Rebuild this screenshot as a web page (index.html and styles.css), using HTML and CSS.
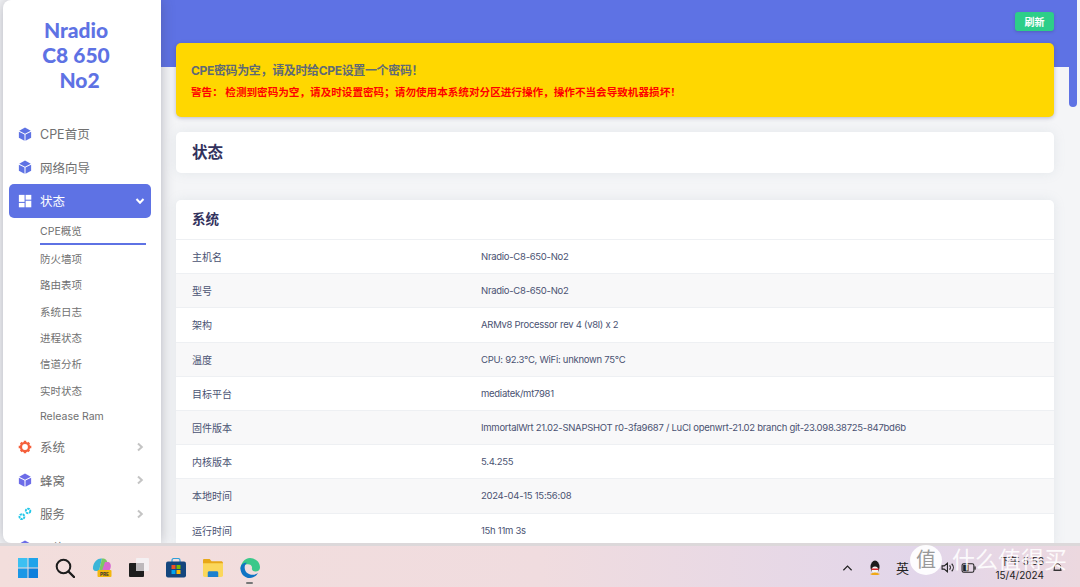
FILE: index.html
```html
<!DOCTYPE html>
<html lang="zh">
<head>
    <meta charset="UTF-8">
    <title>Nradio C8 650 No2</title>
    <link rel="stylesheet" href="styles.css">
</head>
<body>
    <svg class="defs" width="0" height="0">
        <symbol id="cube" viewBox="0 0 16 16">
            <path d="M8 .6 14.600 4.200 8 7.600 1.400 4.200Z"/>
            <path d="M1 5.300 7.400 8.700V15.600L1 12.200Z"/>
            <path d="M15 5.300 8.600 8.700V15.600L15 12.200Z"/>
        </symbol>
        <symbol id="chev-right" viewBox="0 0 10 10">
            <path d="M3 1.500 6.800 5 3 8.500" fill="none" stroke="currentColor" stroke-width="2"/>
        </symbol>
    </svg>

    <div class="window">
        <aside class="sidebar">
            <div class="logo">Nradio<br>C8 650<br><span class="logo-last">No2</span></div>
            <nav class="menu">
                <a class="menu-item"><svg class="menu-icon icon-blue"><use href="#cube"/></svg>CPE首页</a>
                <a class="menu-item"><svg class="menu-icon icon-blue"><use href="#cube"/></svg>网络向导</a>
                <a class="menu-item active">
                    <svg class="menu-icon" viewBox="0 0 16 16" fill="#fff">
                        <rect x="1" y="1" width="6.500" height="8"/>
                        <rect x="8.700" y="1" width="6.500" height="5.500"/>
                        <rect x="1" y="10.200" width="6.500" height="5"/>
                        <rect x="8.700" y="7.700" width="6.500" height="7.500"/>
                    </svg>
                    状态
                    <svg class="arrow" viewBox="0 0 10 10"><path d="M1.500 3 5 6.800 8.500 3" fill="none" stroke="#fff" stroke-width="2"/></svg>
                </a>
                <div class="submenu">
                    <a class="sub-item current">CPE概览</a>
                    <a class="sub-item">防火墙项</a>
                    <a class="sub-item">路由表项</a>
                    <a class="sub-item">系统日志</a>
                    <a class="sub-item">进程状态</a>
                    <a class="sub-item">信道分析</a>
                    <a class="sub-item">实时状态</a>
                    <a class="sub-item">Release Ram</a>
                </div>
                <a class="menu-item">
                    <svg class="menu-icon" viewBox="0 0 16 16">
                        <circle cx="8" cy="8" r="4.600" fill="none" stroke="#f5603c" stroke-width="2.600"/>
                        <path d="M6.600.8h2.800v2.400H6.600zM6.600 12.800h2.800v2.400H6.600zM.8 6.600h2.400v2.800H.8zM12.800 6.600h2.400v2.800h-2.400zM2.200 4l2-2 1.600 1.600-2 2zM10.200 12.400l2-2 1.600 1.600-2 2zM2.200 12l1.600-1.600 2 2-1.600 1.600zM10.200 3.600l1.600-1.600 2 2-1.600 1.600z" fill="#f5603c"/>
                    </svg>
                    系统
                    <svg class="arrow chev"><use href="#chev-right"/></svg>
                </a>
                <a class="menu-item"><svg class="menu-icon icon-violet"><use href="#cube"/></svg>蜂窝<svg class="arrow chev"><use href="#chev-right"/></svg></a>
                <a class="menu-item">
                    <svg class="menu-icon" viewBox="0 0 16 16" fill="none" stroke="#22c7e8" stroke-width="2.200" stroke-dasharray="2.600 .8">
                        <circle cx="4.500" cy="11" r="2.800"/>
                        <circle cx="11.500" cy="4.500" r="2.600"/>
                    </svg>
                    服务
                    <svg class="arrow chev"><use href="#chev-right"/></svg>
                </a>
                <a class="menu-item"><svg class="menu-icon icon-violet"><use href="#cube"/></svg>网络</a>
            </nav>
        </aside>

        <main class="main">
            <header class="topbar"><button class="btn-refresh">刷新</button></header>

            <section class="card alert">
                <h4 class="alert-title">CPE密码为空，请及时给CPE设置一个密码！</h4>
                <p class="alert-text">警告： 检测到密码为空，请及时设置密码；请勿使用本系统对分区进行操作，操作不当会导致机器损坏！</p>
            </section>

            <section class="card page-title"><h2>状态</h2></section>

            <section class="card system">
                <h3>系统</h3>
                <div class="row"><span class="row-key">主机名</span><span>Nradio-C8-650-No2</span></div>
                <div class="row"><span class="row-key">型号</span><span>Nradio-C8-650-No2</span></div>
                <div class="row"><span class="row-key">架构</span><span>ARMv8 Processor rev 4 (v8l) x 2</span></div>
                <div class="row"><span class="row-key">温度</span><span>CPU: 92.3°C, WiFi: unknown 75°C</span></div>
                <div class="row"><span class="row-key">目标平台</span><span>mediatek/mt7981</span></div>
                <div class="row"><span class="row-key">固件版本</span><span>ImmortalWrt 21.02-SNAPSHOT r0-3fa9687 / LuCI openwrt-21.02 branch git-23.098.38725-847bd6b</span></div>
                <div class="row"><span class="row-key">内核版本</span><span>5.4.255</span></div>
                <div class="row"><span class="row-key">本地时间</span><span>2024-04-15 15:56:08</span></div>
                <div class="row"><span class="row-key">运行时间</span><span>15h 11m 3s</span></div>
            </section>
        </main>

        <div class="scrollbar"><div class="scroll-thumb"></div></div>
    </div>

    <footer class="taskbar">
        <div class="task-apps">
            <svg class="app" viewBox="0 0 20 20">
                <rect x="0" y="0" width="9.500" height="9.500" fill="#3cc0f2"/>
                <rect x="10.500" y="0" width="9.500" height="9.500" fill="#1fa3ea"/>
                <rect x="0" y="10.500" width="9.500" height="9.500" fill="#1a97e6"/>
                <rect x="10.500" y="10.500" width="9.500" height="9.500" fill="#0c7fdc"/>
            </svg>
            <svg class="app" viewBox="0 0 20 20" fill="none" stroke="#1c1c1c" stroke-width="2">
                <circle cx="8.500" cy="8.500" r="6.800"/>
                <path d="M13.500 13.500 19 19" stroke-linecap="round" stroke-width="2.400"/>
            </svg>
            <svg class="app" viewBox="0 0 20 20">
                <path d="M1 9C2 3 6 0 10 .5L7 13H4C1.500 13 .6 11 1 9Z" fill="#3bb5d8"/>
                <path d="M10 .5C14 .5 15 2.500 15.500 5L12 13H7Z" fill="#7cc864"/>
                <path d="M13 4H16.500C19.500 5 19.500 10 17 13H10Z" fill="#d86bd0"/>
                <rect x="5.500" y="12" width="14" height="7" rx="1" fill="#f2b70f"/>
                <text class="app-label" x="12.500" y="17.800" text-anchor="middle">PRE</text>
            </svg>
            <svg class="app" viewBox="0 0 20 20">
                <rect x="7" y="0" width="13" height="13" rx="1" fill="#f4f0f2"/>
                <rect x="0" y="5" width="15" height="14" rx="1" fill="#1e1e1e"/>
                <rect x="7" y="5" width="8" height="8" fill="#bdb9bc"/>
            </svg>
            <svg class="app" viewBox="0 0 20 20">
                <path d="M6 4V2.500C6 1 7 .5 8 .5H12C13 .5 14 1 14 2.500V4" fill="none" stroke="#2f9fd8" stroke-width="1.200"/>
                <rect x="0" y="3.500" width="20" height="16" rx="2" fill="#14467e"/>
                <rect x="5.500" y="7" width="4" height="4" fill="#f25022"/>
                <rect x="10.500" y="7" width="4" height="4" fill="#7fba00"/>
                <rect x="5.500" y="12" width="4" height="4" fill="#00a4ef"/>
                <rect x="10.500" y="12" width="4" height="4" fill="#ffb900"/>
            </svg>
            <svg class="app" viewBox="0 0 21 20">
                <path d="M0 2C0 1 .5.500 1.500.500H7L9 3H19C20 3 21 3.500 21 5V6H0Z" fill="#e8a818"/>
                <path d="M0 5H21V18C21 19 20 19.500 19 19.500H2C1 19.500 0 19 0 18Z" fill="#fbd75b"/>
                <path d="M5 19.500V15C5 14 6 13.500 7 13.500H14C15 13.500 16 14 16 15V19.500Z" fill="#1c80cf"/>
            </svg>
            <div class="app-current">
                <svg class="app" viewBox="0 0 20 20">
                    <path d="M10 0C15 0 20 4 20 9.500C20 12 18 13.500 15.500 13.500C13 13.500 11.500 12 12 10C12.500 7 9 5.500 6 6.500C3 7.500 1 10 .5 12C.5 5 4.500 0 10 0Z" fill="#3bc88a"/>
                    <path d="M.5 10C1 6 4 4.500 7 4.800C3.500 7 4 13 8 15.500C11 17.500 15.500 17 18 15C16 18.500 13 20 10 20C4 20 .3 15 .5 10Z" fill="#0f74c4"/>
                </svg>
                <span class="app-dot"></span>
            </div>
        </div>
        <div class="tray">
            <svg class="tray-chevron" viewBox="0 0 12 8"><path d="M1.500 6.500 6 2 10.500 6.500" fill="none" stroke="#222" stroke-width="1.300"/></svg>
            <svg class="tray-qq" viewBox="0 0 12 15">
                <ellipse cx="6" cy="7" rx="4.500" ry="6.500" fill="#1c1c1c"/>
                <ellipse cx="6" cy="10" rx="3.300" ry="3.500" fill="#f4f4f4"/>
                <path d="M2 8.500H10L9 10H3Z" fill="#d8262c"/>
                <path d="M1 14 5 12.500H7L11 14 9 15H3Z" fill="#f0a818"/>
            </svg>
            <span class="tray-lang">英</span>
            <svg class="tray-icon" viewBox="0 0 14 12" fill="none" stroke="#222" stroke-width="1">
                <path d="M1 4.500H3L6 2V10L3 7.500H1Z"/>
                <path d="M8 4C9 5 9 7 8 8M10 2.500C12 4.500 12 7.500 10 9.500"/>
            </svg>
            <svg class="tray-icon" viewBox="0 0 14 12">
                <rect x="1" y="2.500" width="11" height="8" rx="1.500" fill="none" stroke="#222"/>
                <rect x="2" y="3.500" width="5" height="6" fill="#222"/>
                <rect x="12.500" y="5" width="1.200" height="3" fill="#222"/>
            </svg>
            <div class="clock"><span>下午 5:56</span><span>15/4/2024</span></div>
            <svg class="tray-bell" viewBox="0 0 12 12" fill="none" stroke="#222"><path d="M2.500 9V5.500C2.500 3.500 4 2 6 2S9.500 3.500 9.500 5.500V9ZM1.500 9H10.500"/></svg>
        </div>
        <div class="watermark">
            <span class="wm-badge">值</span>
            <span class="wm-name">什么值得买</span>
        </div>
    </footer>
</body>
</html>
```

FILE: styles.css
```css
* {
    box-sizing: border-box;
}
html, body {
    margin: 0;
    height: 587px;
    overflow: hidden;
}
body {
    font-family: Inter, "Noto Sans CJK SC", sans-serif;
    background-color: #f4f5f7;
    color: #525f7f;
}
h2, h3, h4, p {
    margin: 0;
}
.defs {
    position: absolute;
}
.window {
    display: flex;
    height: 543px;
    padding-left: 3px;
    background-color: #f4f5f7;
    overflow: hidden;
}

/* sidebar */
.sidebar {
    flex: none;
    width: 158px;
    height: 543px;
    background-color: #fff;
    border-radius: 8px 0 0 8px;
    box-shadow: 0 0 14px rgba(60, 60, 80, 0.35);
    overflow: hidden;
    position: relative;
    z-index: 1;
}
.logo {
    height: 117px;
    padding: 17px 12px 0 0;
    text-align: center;
    font-family: Lato, "Noto Sans CJK SC", sans-serif;
    font-size: 21px;
    font-weight: 900;
    line-height: 25px;
    color: #5e72e4;
}
.logo-last {
    padding-left: 7px;
}
.menu {
    display: flex;
    flex-direction: column;
}
.menu-item {
    display: flex;
    align-items: center;
    flex: none;
    height: 33.6px;
    margin: 0 10px 0 6px;
    padding: 0 6px 0 9px;
    border-radius: 5px;
    font-size: 12.5px;
    color: #707070;
}
.menu-item.active {
    background-color: #5e72e4;
    color: #fff;
}
.menu-icon {
    flex: none;
    width: 14px;
    height: 14px;
    margin-right: 8px;
}
.icon-blue {
    fill: #5e72e4;
}
.icon-violet {
    fill: #6c6ce8;
}
.arrow {
    width: 10px;
    height: 10px;
    margin-left: auto;
}
.chev {
    color: #c4c4c4;
}
.submenu {
    display: flex;
    flex-direction: column;
    padding: 1px 0 0 37px;
}
.sub-item {
    display: flex;
    align-items: center;
    height: 26.4px;
    margin-right: 15px;
    font-size: 10.5px;
    color: #707070;
}
.sub-item.current {
    border-bottom: 2px solid #5e72e4;
}

/* main column */
.main {
    flex: none;
    width: 908px;
    padding: 0 15px;
    overflow: hidden;
}
.topbar {
    display: flex;
    justify-content: flex-end;
    align-items: flex-start;
    height: 67px;
    margin: 0 -15px;
    padding: 12px 15px 0 0;
    background-color: #5e72e4;
}
.btn-refresh {
    width: 39px;
    height: 19px;
    padding: 0;
    border: none;
    border-radius: 3px;
    background-color: #2dce89;
    box-shadow: 0 1px 3px rgba(50, 50, 93, 0.3);
    font-family: inherit;
    font-size: 10px;
    font-weight: 700;
    color: #fff;
}
.card {
    background-color: #fff;
    border-radius: 5px;
    box-shadow: 0 0 12px rgba(136, 152, 170, 0.15);
}
.alert {
    position: relative;
    height: 74px;
    margin-top: -24px;
    padding: 20px 15px 0;
    background-color: #ffd700;
    box-shadow: 0 1px 4px rgba(50, 50, 93, 0.3);
}
.alert-title {
    font-size: 12px;
    line-height: 16px;
    font-weight: 700;
    letter-spacing: -0.35px;
    color: #5f6a75;
}
.alert-text {
    margin-top: 6px;
    font-size: 10.6px;
    line-height: 15px;
    font-weight: 700;
    color: #ff0000;
}
.page-title {
    height: 41px;
    margin-top: 15px;
    padding: 0 16px;
}
.page-title h2 {
    font-size: 15.5px;
    line-height: 41px;
    font-weight: 700;
    color: #32325d;
}
.system {
    margin-top: 27px;
}
.system h3 {
    height: 39px;
    padding: 0 16px;
    font-size: 13.5px;
    line-height: 39px;
    font-weight: 700;
    color: #32325d;
}
.row {
    display: flex;
    align-items: center;
    height: 34.2px;
    padding-left: 16px;
    border-top: 1px solid #eef0f3;
    font-size: 9.5px;
    letter-spacing: -0.27px;
    color: #4a5272;
}
.row:nth-of-type(even) {
    background-color: #f8f8f9;
}
.row-key {
    flex: none;
    width: 289px;
    font-size: 10px;
    letter-spacing: 0;
}

/* scrollbar */
.scrollbar {
    flex: none;
    width: 8px;
    background-color: #f4f5f7;
}
.scroll-thumb {
    height: 107px;
    border-radius: 0 0 4px 4px;
    background-color: #5e72e4;
}

/* taskbar */
.taskbar {
    position: relative;
    display: flex;
    justify-content: space-between;
    align-items: center;
    height: 44px;
    padding: 2px 17px 0 18px;
    border-top: 3px solid #dcd8da;
    background: linear-gradient(90deg, #f3dedc 0%, #f0dcdf 50%, #e2d6ea 85%, #ecd8df 100%);
}
.task-apps {
    display: flex;
    align-items: center;
    gap: 17px;
}
.app {
    display: block;
    width: 20px;
    height: 20px;
}
.app-label {
    font-family: "Liberation Mono", monospace;
    font-size: 5px;
    font-weight: 700;
    fill: #333;
}
.app-current {
    position: relative;
}
.app-dot {
    position: absolute;
    left: 6px;
    bottom: -6px;
    width: 7px;
    height: 2px;
    border-radius: 1px;
    background-color: #777;
}
.tray {
    display: flex;
    align-items: center;
}
.tray-chevron {
    width: 11px;
    height: 8px;
    margin-right: 16px;
}
.tray-qq {
    width: 12px;
    height: 15px;
    margin-right: 15px;
}
.tray-lang {
    font-size: 13px;
    color: #222;
    margin-right: 32px;
}
.tray-icon {
    width: 15px;
    height: 13px;
    margin-right: 5px;
}
.clock {
    display: flex;
    flex-direction: column;
    align-items: flex-end;
    width: 63px;
    font-size: 10px;
    line-height: 14px;
    color: #222;
}
.tray-bell {
    width: 11px;
    height: 11px;
    margin-left: 8px;
}
.watermark {
    position: absolute;
    left: 910px;
    top: -1px;
    display: flex;
    align-items: center;
    gap: 10px;
}
.wm-badge {
    width: 32px;
    height: 30px;
    border-radius: 50%;
    background-color: rgba(255, 255, 255, 0.92);
    font-size: 20px;
    line-height: 30px;
    text-align: center;
    color: #999;
}
.wm-name {
    font-size: 23px;
    line-height: 30px;
    color: rgba(255, 255, 255, 0.88);
}
```
